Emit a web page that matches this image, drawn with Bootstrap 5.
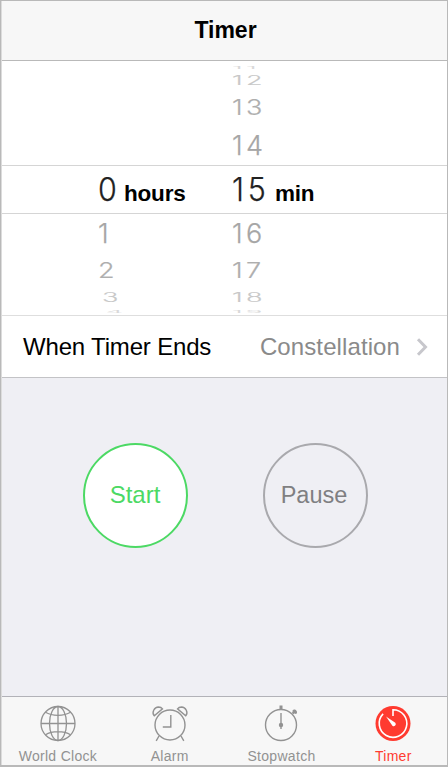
<!DOCTYPE html>
<html lang="en">
<head>
<meta charset="utf-8">
<meta name="viewport" content="width=device-width, initial-scale=1">
<title>Timer</title>
<link href="https://cdn.jsdelivr.net/npm/bootstrap@5.3.0/dist/css/bootstrap.min.css" rel="stylesheet">
<style>
body{font-family:"Liberation Sans",Arial,sans-serif;background:#efeff4;color:#000}
.phone{width:448px;height:767px;border:solid #b9b9b9;border-width:1px 1px 2px 1px;box-shadow:inset 1px 0 #dcdcdc}
.title-bar{height:60px;background:#f7f7f7;border-bottom:1px solid #b9b9b9;font-size:23px;font-weight:700;line-height:1;padding-left:2px;margin-left:1px}
.wheel{height:255px;border-bottom:1px solid #dedede;margin-left:1px}
.slot{display:grid;grid-template-columns:96px 134px 1fr;grid-template-rows:100%;align-items:center}
.slot>span{display:flex;align-items:center;line-height:1;height:100%}
.digit{display:inline-block;font-family:Inter,Roboto,sans-serif;font-weight:300;-webkit-text-stroke:.25px currentColor;font-size:27px;line-height:1;letter-spacing:3.3px;transform-origin:left center}
.s-now{height:49px;border:solid #d5d5d5;border-width:1px 0}
.s-now .digit{font-size:32px;color:#222;transform:scaleX(.95);width:26px;white-space:nowrap;letter-spacing:4px}
.s-now .digit.wide{width:38px}
.unit{font-size:22.5px;font-weight:700;letter-spacing:-.2px;padding-top:9px}
.u-min{margin-left:5px}
.s-near{color:#a6a6a6}
.s-mid{color:#aeaeae}.s-mid .digit{transform:scaleY(.78)}
.s-far{color:#c8c8c8}.s-far .digit{transform:scaleY(.49)}
.s-edge{color:#d8d8d8;height:3px}
.s-edge .digit{transform:scaleY(.14)}
.gap-top{height:3px}.gap-end{height:4px}.gap-start{height:5px}
.h12{height:17px}.h13{height:37px}.h14{height:39px}.h16{height:38px}.h17{height:37px}.h18{height:17px}
.setting{height:62px;border-bottom:1px solid #c3c3c6;font-size:24px;padding:1px 19px 0 21px;margin-left:1px;line-height:1}
.setting .name{letter-spacing:-.17px}
.setting .value{color:#8a8a8a;margin-right:16px;letter-spacing:.1px}
.actions{padding:65px 0 0 82px;gap:74.5px}
.round{width:105px;height:105px;border:2px solid #a9a9ad;border-radius:50%;background:transparent;color:#7f7f82;font-size:23.5px;line-height:1;padding:0 2px 0 0}
.round.go{border-color:#4cd964;background:#fff;color:#4cd964;font-size:24px;padding:0 1px 2px 0}
.tabs{height:69px;background:#f7f7f7;border-top:1px solid #b2b2b8;margin-left:1px}
.tab{width:111.8px;flex:none;color:#929292;font-size:14px;line-height:16px;letter-spacing:.3px;padding-top:7px;text-decoration:none}
.tab svg{width:40px;height:40px;display:block;margin-bottom:4px}
.tab.on{color:#ff3b30}
</style>
<script src="https://cdn.jsdelivr.net/npm/bootstrap@5.3.0/dist/js/bootstrap.bundle.min.js"></script>
</head>
<body>
<div class="phone d-flex flex-column overflow-hidden">
  <header class="title-bar d-flex align-items-center justify-content-center flex-shrink-0">Timer</header>

  <section class="wheel bg-white flex-shrink-0">
    <div class="gap-start"></div>
    <div class="slot s-edge"><i></i><span></span><span><b class="digit">11</b></span></div>
    <div class="gap-top"></div>
    <div class="slot s-far h12"><i></i><span></span><span><b class="digit">12</b></span></div>
    <div class="slot s-mid h13"><i></i><span></span><span><b class="digit">13</b></span></div>
    <div class="slot s-near h14"><i></i><span></span><span><b class="digit">14</b></span></div>
    <div class="slot s-now"><i></i><span><b class="digit">0</b><b class="unit">hours</b></span><span><b class="digit wide">15</b><b class="unit u-min">min</b></span></div>
    <div class="slot s-near h16"><i></i><span><b class="digit">1</b></span><span><b class="digit">16</b></span></div>
    <div class="slot s-mid h17"><i></i><span><b class="digit">2</b></span><span><b class="digit">17</b></span></div>
    <div class="slot s-far h18"><i></i><span class="ps-1"><b class="digit">3</b></span><span><b class="digit">18</b></span></div>
    <div class="gap-end"></div>
    <div class="slot s-edge"><i></i><span class="ps-2"><b class="digit">4</b></span><span><b class="digit">19</b></span></div>
  </section>

  <section class="setting bg-white d-flex align-items-center flex-shrink-0">
    <span class="name">When Timer Ends</span>
    <span class="value ms-auto">Constellation</span>
    <svg width="12" height="18" viewBox="0 0 12 18" fill="none" stroke="#c7c7cc" stroke-width="3"><path d="M2 1.2 9.5 9 2 16.8"/></svg>
  </section>

  <main class="actions d-flex flex-grow-1 align-items-start">
    <button class="round go" type="button">Start</button>
    <button class="round" type="button">Pause</button>
  </main>

  <nav class="tabs d-flex flex-shrink-0">
    <a class="tab d-flex flex-column align-items-center">
      <svg viewBox="0 0 40 40" fill="none" stroke="currentColor" stroke-width="1.3"><circle cx="20" cy="19.5" r="17"/><ellipse cx="20" cy="19.5" rx="8.5" ry="17"/><path d="M20 2.5v34M3 19.5h34M7.5 8.3c6.500 4 18.500 4 25 0M7.500 30.700c6.500-4 18.500-4 25 0"/></svg>
      World Clock</a>
    <a class="tab d-flex flex-column align-items-center">
      <svg viewBox="0 0 40 40" fill="none" stroke="currentColor" stroke-width="1.4"><circle cx="20" cy="21" r="15"/><path d="M20.800 11v12h-8M9 32 6.200 36.800M31 32l2.800 4.800M4.300 11.800C1.300 8.400 4.300 3.200 8.500 3c2 0 3.200.8 4 1.900ZM35.700 11.800c3-3.400 0-8.600-4.200-8.800-2 0-3.200.8-4 1.900Z"/></svg>
      Alarm</a>
    <a class="tab d-flex flex-column align-items-center">
      <svg viewBox="0 0 40 40" fill="none" stroke="currentColor" stroke-width="1.4"><circle cx="20" cy="21" r="15.500"/><path d="M20 9v16"/><circle cx="20" cy="21" r="2.200" fill="currentColor" stroke="none"/><path fill="currentColor" stroke="none" d="M18.500 1.500h3V6h-3zM31.500 6.500c1-1.500 3-1.200 4 .3 1 1.500.5 2.800-.5 3.200l-1.700-.6-1 .9-1.500-1.500.8-.8z"/></svg>
      Stopwatch</a>
    <a class="tab on d-flex flex-column align-items-center">
      <svg viewBox="0 0 40 40" fill="none"><circle cx="20" cy="19.500" r="17.500" fill="currentColor"/><path stroke="#fff" stroke-width="1.600" d="M20 12V5.700a13.800 13.800 0 1 1-9.900 4.200"/><path fill="#fff" d="M13 12.500 22.300 18.800a2.100 2.100 0 0 1-2.900 3z"/></svg>
      Timer</a>
  </nav>
</div>
</body>
</html>
